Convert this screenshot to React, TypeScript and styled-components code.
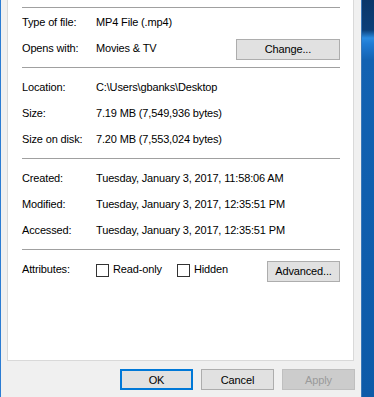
import styled, { createGlobalStyle } from "styled-components";

const GlobalStyle = createGlobalStyle`
  body {
    margin: 0;
    background: #f0f0f0;
    font-family: "Liberation Sans", Arial, sans-serif;
    font-size: 11px;
    letter-spacing: -0.15px;
    color: #000;
  }
`;

type Field = { label: string; value: string };

const fileInfo: Field[] = [
  { label: "Location:", value: "C:\\Users\\gbanks\\Desktop" },
  { label: "Size:", value: "7.19 MB (7,549,936 bytes)" },
  { label: "Size on disk:", value: "7.20 MB (7,553,024 bytes)" },
];

const dates: Field[] = [
  { label: "Created:", value: "Tuesday, January 3, 2017, 11:58:06 AM" },
  { label: "Modified:", value: "Tuesday, January 3, 2017, 12:35:51 PM" },
  { label: "Accessed:", value: "Tuesday, January 3, 2017, 12:35:51 PM" },
];

const App = () => {
  return (
    <Screen>
      <GlobalStyle />
      <Dialog>
        <Panel>
          <Separator />
          <Section $top={1}>
            <Row>
              <Label>Type of file:</Label>
              <Value>MP4 File (.mp4)</Value>
            </Row>
            <Row>
              <Label>Opens with:</Label>
              <Value>Movies &amp; TV</Value>
              <Button $width={104} $offset={2}>
                Change...
              </Button>
            </Row>
          </Section>
          <Separator />
          <Section>
            {fileInfo.map((f) => (
              <Row key={f.label}>
                <Label>{f.label}</Label>
                <Value>{f.value}</Value>
              </Row>
            ))}
          </Section>
          <Separator />
          <Section>
            {dates.map((f) => (
              <Row key={f.label}>
                <Label>{f.label}</Label>
                <Value>{f.value}</Value>
              </Row>
            ))}
          </Section>
          <Separator />
          <Section>
            <Row>
              <Label>Attributes:</Label>
              <CheckItem $width={81}>
                <Box />
                Read-only
              </CheckItem>
              <CheckItem>
                <Box />
                Hidden
              </CheckItem>
              <Button $width={73} $offset={4}>
                Advanced...
              </Button>
            </Row>
          </Section>
        </Panel>
        <ButtonBar>
          <Button $width={73} $primary>
            OK
          </Button>
          <Button $width={73}>Cancel</Button>
          <Button $width={73} disabled>
            Apply
          </Button>
        </ButtonBar>
      </Dialog>
      <Desktop />
    </Screen>
  );
};

const Screen = styled.div`
  display: flex;
  width: 374px;
  height: 397px;
  overflow: hidden;
`;

const Dialog = styled.div`
  box-sizing: border-box;
  width: 362px;
  display: flex;
  flex-direction: column;
  padding: 0 6px;
  background: #f0f0f0;
  border-left: 1px solid #2b7cd3;
  border-right: 1px solid #3a78b8;
`;

const Panel = styled.div`
  box-sizing: border-box;
  width: 347px;
  height: 361px;
  padding: 7px 13px 0 14px;
  background: #fff;
  border: 1px solid #d9d9d9;
  border-top: none;
`;

const Separator = styled.div`
  height: 1px;
  background: #a0a0a0;
`;

const Section = styled.div<{ $top?: number }>`
  padding: ${(p) => p.$top ?? 6}px 0 6px;
`;

const Row = styled.div`
  display: flex;
  align-items: center;
  height: 26px;
`;

const Label = styled.span`
  width: 74px;
  flex-shrink: 0;
`;

const Value = styled.span`
  flex: 1;
  white-space: nowrap;
`;

const CheckItem = styled.label<{ $width?: number }>`
  display: flex;
  align-items: center;
  width: ${(p) => (p.$width ? `${p.$width}px` : "auto")};
  flex: ${(p) => (p.$width ? "none" : 1)};
`;

const Box = styled.span`
  box-sizing: border-box;
  width: 13px;
  height: 13px;
  margin: 3px 4px 0 0;
  background: #fff;
  border: 1px solid #333;
`;

const Button = styled.button<{ $width: number; $offset?: number; $primary?: boolean }>`
  box-sizing: border-box;
  width: ${(p) => p.$width}px;
  height: 21px;
  margin: ${(p) => p.$offset ?? 0}px 0 0 auto;
  padding: 0;
  font: inherit;
  letter-spacing: inherit;
  color: #000;
  background: #e1e1e1;
  border: ${(p) => (p.$primary ? "2px solid #0078d7" : "1px solid #adadad")};

  &:disabled {
    color: #9a9a9a;
    background: #cccccc;
    border-color: #bfbfbf;
  }
`;

const ButtonBar = styled.div`
  display: flex;
  justify-content: flex-end;
  gap: 8px;
  padding-top: 8px;

  > button {
    margin-left: 0;
  }
`;

const Desktop = styled.div`
  flex: 1;
  background: linear-gradient(
    to bottom,
    #093769 0,
    #0b3f78 30px,
    #2a8be0 38px,
    #1f7bd4 44px,
    #1262b2 60px,
    #0d5aa8 100%
  );
`;

export default App;
